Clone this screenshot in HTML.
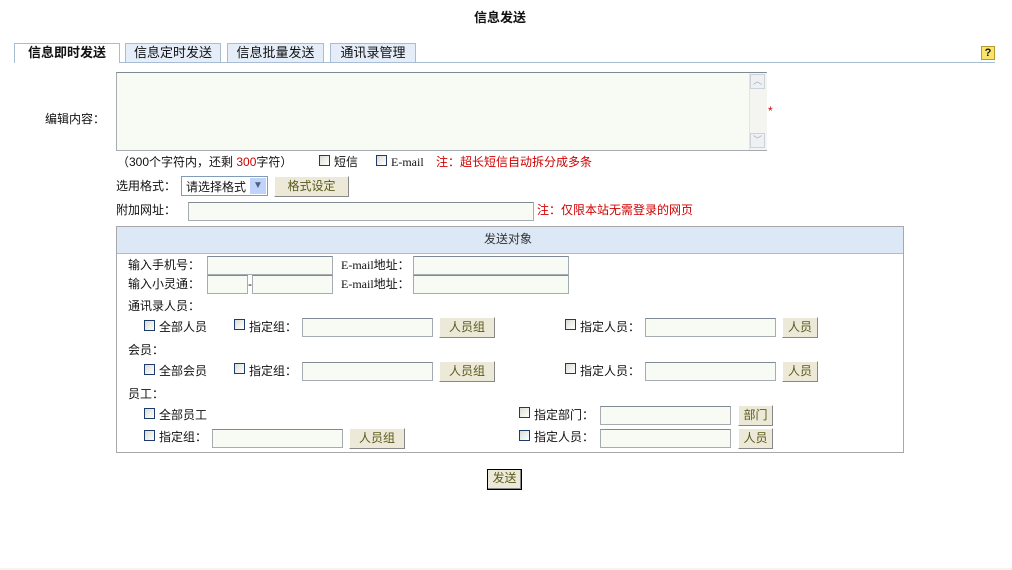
<!DOCTYPE html>
<html><head><meta charset="utf-8"><style>
body{margin:0;width:1012px;height:570px;background:#fff;position:relative;overflow:hidden;font-family:"Liberation Sans","Noto Sans CJK SC","WenQuanYi Zen Hei",sans-serif;font-size:12px;color:#111;}
.a{position:absolute;white-space:nowrap;line-height:14px;}
.i{position:absolute;box-sizing:border-box;border:1px solid #a5acb2;border-top-color:#7f8a94;background:#f8fbf4;}
.b{position:absolute;box-sizing:border-box;border:1px solid #fff;border-right-color:#888;border-bottom-color:#888;background:#ece9d8;color:#5a5a1a;text-align:center;font-size:12px;}
.c{position:absolute;width:11px;height:11px;box-sizing:border-box;border:1px solid #1c3d6b;background:linear-gradient(135deg,#dcdcd5,#fff);}
.r{color:#d00000;}
.tab{position:absolute;top:43px;height:19px;box-sizing:border-box;border:1px solid #a8bcd4;border-bottom:none;background:#e4edf8;text-align:center;line-height:18px;font-size:13px;}
</style></head><body>
<div class="a" style="left:474px;top:11px;font-weight:bold;font-size:13px;">信息发送</div>
<div style="position:absolute;left:14px;top:62px;width:981px;height:1px;background:#a8bcd4"></div>
<div class="tab" style="left:14px;width:106px;height:20px;background:#fff;font-weight:bold;">信息即时发送</div>
<div class="tab" style="left:125px;width:96px;">信息定时发送</div>
<div class="tab" style="left:227px;width:97px;">信息批量发送</div>
<div class="tab" style="left:330px;width:86px;">通讯录管理</div>
<div style="position:absolute;left:981px;top:46px;width:14px;height:14px;box-sizing:border-box;border:1px solid #b89a30;background:#f8e46a;font:bold 11px 'Liberation Sans';text-align:center;line-height:12px;">?</div>

<div class="a" style="left:45px;top:112px;">编辑内容：</div>
<div class="i" style="left:116px;top:72px;width:651px;height:79px;"></div>
<div style="position:absolute;left:749px;top:73px;width:17px;height:77px;background:#f4f4f0;border-left:1px solid #e4e4e0;"></div>
<div style="position:absolute;left:750px;top:74px;width:15px;height:15px;border:1px solid #cbd3da;box-sizing:border-box;background:#eef0f3;font-size:9px;color:#aab;text-align:center;line-height:13px">︿</div>
<div style="position:absolute;left:750px;top:133px;width:15px;height:15px;border:1px solid #cbd3da;box-sizing:border-box;background:#eef0f3;font-size:9px;color:#aab;text-align:center;line-height:13px">﹀</div>
<div class="a r" style="left:768px;top:104px;">*</div>

<div class="a" style="left:117px;top:155px;">（300个字符内，还剩 <span class="r">300</span>字符）</div>
<div class="c" style="left:319px;top:155px"></div><div class="a" style="left:334px;top:155px;">短信</div>
<div class="c" style="left:376px;top:155px"></div><div class="a" style="left:391px;top:155px;font-family:'Liberation Serif',serif;">E-mail</div>
<div class="a r" style="left:436px;top:155px;">注：超长短信自动拆分成多条</div>

<div class="a" style="left:116px;top:179px;">选用格式：</div>
<div class="i" style="left:181px;top:176px;width:87px;height:20px;background:#fff;border-color:#7f9db9;"></div>
<div class="a" style="left:186px;top:180px;">请选择格式</div>
<div style="position:absolute;left:250px;top:178px;width:16px;height:16px;background:#c1d3fb;color:#4d6185;font-size:10px;text-align:center;line-height:16px;">▼</div>
<div class="b" style="left:274px;top:176px;width:75px;height:21px;line-height:19px;">格式设定</div>

<div class="a" style="left:116px;top:203px;">附加网址：</div>
<div class="i" style="left:188px;top:202px;width:346px;height:19px;"></div>
<div class="a r" style="left:537px;top:203px;">注：仅限本站无需登录的网页</div>

<div style="position:absolute;left:116px;top:226px;width:788px;height:227px;box-sizing:border-box;border:1px solid #a8a8a8;"></div>
<div style="position:absolute;left:117px;top:227px;width:786px;height:26px;background:#dde8f6;border-bottom:1px solid #a8bcd4;"></div>
<div class="a" style="left:484px;top:232px;color:#333;">发送对象</div>

<div class="a" style="left:128px;top:258px;">输入手机号：</div>
<div class="i" style="left:207px;top:256px;width:126px;height:19px;"></div>
<div class="a" style="left:341px;top:258px;font-family:'Liberation Serif','Noto Sans CJK SC',serif;">E-mail地址：</div>
<div class="i" style="left:413px;top:256px;width:156px;height:19px;"></div>
<div class="a" style="left:128px;top:277px;">输入小灵通：</div>
<div class="i" style="left:207px;top:275px;width:41px;height:19px;"></div>
<div class="a" style="left:248px;top:277px;">-</div>
<div class="i" style="left:252px;top:275px;width:81px;height:19px;"></div>
<div class="a" style="left:341px;top:277px;font-family:'Liberation Serif','Noto Sans CJK SC',serif;">E-mail地址：</div>
<div class="i" style="left:413px;top:275px;width:156px;height:19px;"></div>

<div class="a" style="left:128px;top:299px;">通讯录人员：</div>
<div class="c" style="left:144px;top:320px"></div><div class="a" style="left:159px;top:320px;">全部人员</div>
<div class="c" style="left:234px;top:319px"></div><div class="a" style="left:249px;top:320px;">指定组：</div>
<div class="i" style="left:302px;top:318px;width:131px;height:19px;"></div>
<div class="b" style="left:439px;top:317px;width:56px;height:21px;line-height:19px;">人员组</div>
<div class="c" style="left:565px;top:319px"></div><div class="a" style="left:580px;top:320px;">指定人员：</div>
<div class="i" style="left:645px;top:318px;width:131px;height:19px;"></div>
<div class="b" style="left:782px;top:317px;width:36px;height:21px;line-height:19px;">人员</div>

<div class="a" style="left:128px;top:343px;">会员：</div>
<div class="c" style="left:144px;top:364px"></div><div class="a" style="left:159px;top:364px;">全部会员</div>
<div class="c" style="left:234px;top:363px"></div><div class="a" style="left:249px;top:364px;">指定组：</div>
<div class="i" style="left:302px;top:362px;width:131px;height:19px;"></div>
<div class="b" style="left:439px;top:361px;width:56px;height:21px;line-height:19px;">人员组</div>
<div class="c" style="left:565px;top:363px"></div><div class="a" style="left:580px;top:364px;">指定人员：</div>
<div class="i" style="left:645px;top:362px;width:131px;height:19px;"></div>
<div class="b" style="left:782px;top:361px;width:36px;height:21px;line-height:19px;">人员</div>

<div class="a" style="left:128px;top:387px;">员工：</div>
<div class="c" style="left:144px;top:408px"></div><div class="a" style="left:159px;top:408px;">全部员工</div>
<div class="c" style="left:519px;top:407px"></div><div class="a" style="left:534px;top:408px;">指定部门：</div>
<div class="i" style="left:600px;top:406px;width:131px;height:19px;"></div>
<div class="b" style="left:738px;top:405px;width:35px;height:21px;line-height:19px;">部门</div>
<div class="c" style="left:144px;top:430px"></div><div class="a" style="left:159px;top:430px;">指定组：</div>
<div class="i" style="left:212px;top:429px;width:131px;height:19px;"></div>
<div class="b" style="left:349px;top:428px;width:56px;height:21px;line-height:19px;">人员组</div>
<div class="c" style="left:519px;top:430px"></div><div class="a" style="left:534px;top:430px;">指定人员：</div>
<div class="i" style="left:600px;top:429px;width:131px;height:19px;"></div>
<div class="b" style="left:738px;top:428px;width:35px;height:21px;line-height:19px;">人员</div>

<div class="b" style="left:487px;top:469px;width:35px;height:21px;line-height:17px;border:1px solid #000;box-shadow:inset -1px -1px #888;">发送</div>
<div style="position:absolute;left:0;top:568px;width:1012px;height:2px;background:#f4f6ee"></div>
</body></html>
